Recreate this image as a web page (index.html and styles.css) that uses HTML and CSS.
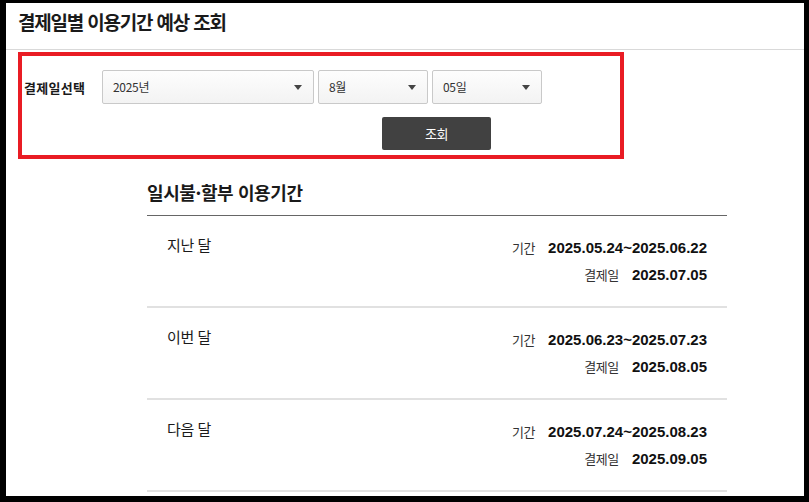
FILE: index.html
```html
<!DOCTYPE html>
<html lang="ko">
<head>
<meta charset="utf-8">
<title>결제일별 이용기간 예상 조회</title>
<link rel="stylesheet" href="styles.css">
</head>
<body>
<div class="frame">
  <header class="header">
    <h1 class="title">결제일별 이용기간 예상 조회</h1>
  </header>
  <div class="search-box">
    <div class="search-row">
      <span class="search-label">결제일선택</span>
      <div class="select select-year"><span class="select-text">2025년</span><span class="arrow"></span></div>
      <div class="select select-small"><span class="select-text">8월</span><span class="arrow"></span></div>
      <div class="select select-small"><span class="select-text">05일</span><span class="arrow"></span></div>
    </div>
    <div class="button-row">
      <button class="btn-search" type="button">조회</button>
    </div>
  </div>
  <section class="period">
    <h2 class="period-title">일시불·할부 이용기간</h2>
    <ul class="period-list">
      <li class="period-row">
        <span class="row-name">지난 달</span>
        <dl class="row-info">
          <div class="info-line"><dt>기간</dt><dd>2025.05.24~2025.06.22</dd></div>
          <div class="info-line"><dt>결제일</dt><dd>2025.07.05</dd></div>
        </dl>
      </li>
      <li class="period-row">
        <span class="row-name">이번 달</span>
        <dl class="row-info">
          <div class="info-line"><dt>기간</dt><dd>2025.06.23~2025.07.23</dd></div>
          <div class="info-line"><dt>결제일</dt><dd>2025.08.05</dd></div>
        </dl>
      </li>
      <li class="period-row">
        <span class="row-name">다음 달</span>
        <dl class="row-info">
          <div class="info-line"><dt>기간</dt><dd>2025.07.24~2025.08.23</dd></div>
          <div class="info-line"><dt>결제일</dt><dd>2025.09.05</dd></div>
        </dl>
      </li>
    </ul>
  </section>
</div>
</body>
</html>
```
FILE: styles.css
```css
* { box-sizing: border-box; }
html, body { margin: 0; padding: 0; }
body {
  background: #000;
  font-family: "Noto Sans CJK KR", "Noto Sans", sans-serif;
  color: #222;
}
.frame {
  margin: 3px 5px 0 6px;
  width: 798px;
  height: 493px;
  background: #fff;
  overflow: hidden;
}
.header {
  height: 47px;
  padding: 6px 0 0 12px;
  border-bottom: 1px solid #d9d9d9;
}
.title {
  margin: 0;
  font-size: 19px;
  line-height: 26px;
  font-weight: 700;
  letter-spacing: -1.2px;
  color: #1a1a1a;
}
.search-box {
  margin: 2px 0 0 12px;
  width: 606px;
  height: 107px;
  border: 4px solid #e91c24;
  padding: 14px 0 0 2px;
}
.search-row {
  display: flex;
  align-items: center;
  gap: 4px;
}
.search-label {
  width: 74px;
  font-size: 13px;
  font-weight: 700;
  letter-spacing: 0.3px;
  color: #1a1a1a;
}
.select {
  height: 34px;
  display: flex;
  align-items: center;
  justify-content: space-between;
  padding: 0 11px 0 10px;
  border: 1px solid #c9c9c9;
  border-radius: 2px;
  background: linear-gradient(#fdfdfd, #f3f3f3);
  font-size: 12px;
  color: #333;
}
.select-year { width: 212px; }
.select-small { width: 110px; }
.select-text { letter-spacing: -0.3px; margin-top: -2px; }
.arrow {
  width: 0;
  height: 0;
  border-left: 4px solid transparent;
  border-right: 4px solid transparent;
  border-top: 5px solid #444;
}
.button-row {
  margin-top: 13px;
  padding-left: 358px;
}
.btn-search {
  width: 109px;
  height: 33px;
  border: 0;
  border-radius: 2px;
  background: #414141;
  color: #fff;
  font-family: "Noto Sans CJK KR", sans-serif;
  font-size: 13px;
  letter-spacing: -0.5px;
  padding: 0;
  display: block;
}
.period {
  margin: 20px 0 0 141px;
  width: 580px;
}
.period-title {
  margin: 0;
  font-size: 18px;
  line-height: 26px;
  font-weight: 700;
  letter-spacing: -0.4px;
  color: #1a1a1a;
  padding-bottom: 10px;
  border-bottom: 1px solid #666;
}
.period-list {
  list-style: none;
  margin: 0;
  padding: 0;
}
.period-row {
  height: 92px;
  display: flex;
  justify-content: space-between;
  align-items: flex-start;
  padding: 18px 20px 0 20px;
  border-bottom: 2px solid #e1e1e1;
}
.row-name {
  font-size: 15px;
  line-height: 21px;
  letter-spacing: -0.4px;
  color: #1a1a1a;
}
.row-info {
  margin: 0;
  display: flex;
  flex-direction: column;
  align-items: flex-end;
}
.info-line {
  display: flex;
  align-items: center;
  height: 27px;
  gap: 13px;
}
.info-line dt {
  font-size: 13px;
  letter-spacing: -0.4px;
  color: #333;
}
.info-line dd {
  margin: 0;
  font-family: "Liberation Sans", Arial, sans-serif;
  font-weight: 700;
  font-size: 15px;
  color: #111;
}
```
